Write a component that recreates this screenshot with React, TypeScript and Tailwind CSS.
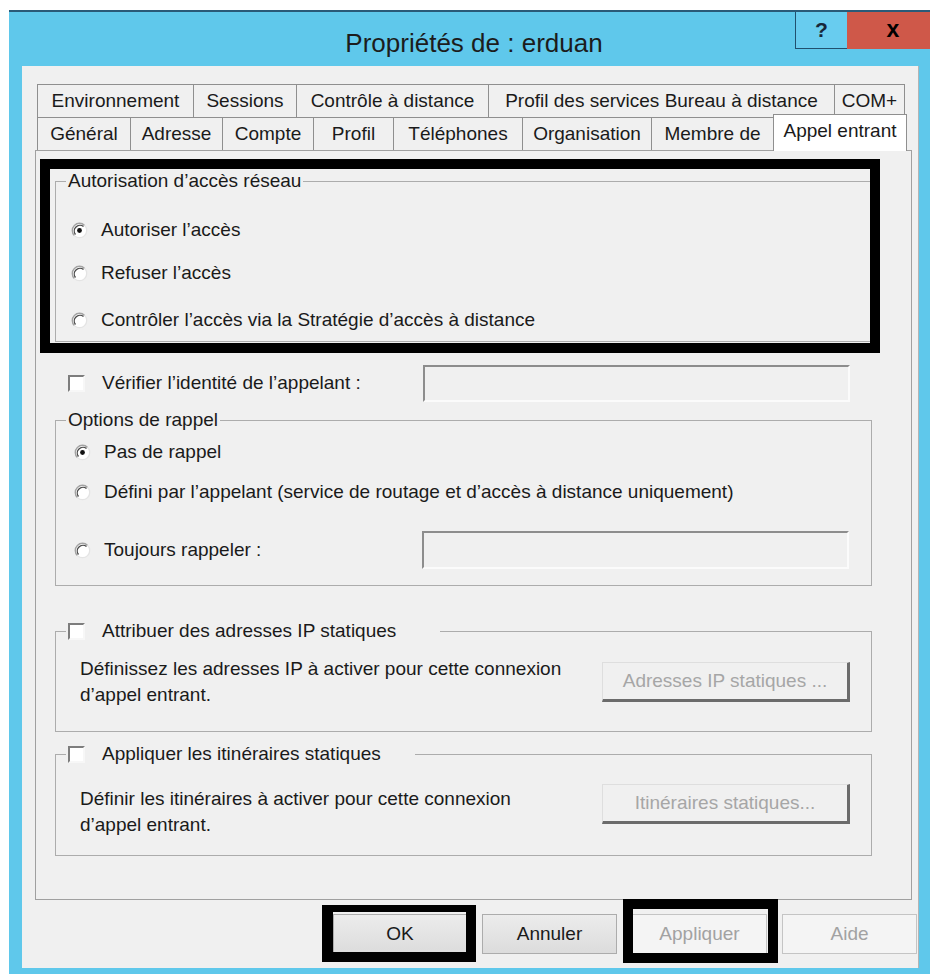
import React from "react";

const FONT: React.CSSProperties = {
  fontFamily: '"Liberation Sans", Arial, sans-serif',
};

type Tab = { label: string; w: string; last?: boolean };

const backRow: Tab[] = [
  { label: "Environnement", w: "w-[156px]" },
  { label: "Sessions", w: "w-[103px]" },
  { label: "Contrôle à distance", w: "w-[192px]" },
  { label: "Profil des services Bureau à distance", w: "w-[346px]" },
  { label: "COM+", w: "w-[71px]", last: true },
];

const frontRow: Tab[] = [
  { label: "Général", w: "w-[93px]" },
  { label: "Adresse", w: "w-[92px]" },
  { label: "Compte", w: "w-[91px]" },
  { label: "Profil", w: "w-[80px]" },
  { label: "Téléphones", w: "w-[129px]" },
  { label: "Organisation", w: "w-[129px]" },
  { label: "Membre de", w: "w-[122px]" },
];

function TabItem({ tab }: { tab: Tab }) {
  return (
    <div
      className={`${tab.w} h-[33px] flex items-center justify-center whitespace-nowrap border-t border-l border-[#8f8f8f] bg-[#f0f0f0] text-[19px] ${
        tab.last ? "border-r" : ""
      }`}
    >
      {tab.label}
    </div>
  );
}

function Radio({ checked = false }: { checked?: boolean }) {
  return (
    <svg width="17" height="17" viewBox="0 0 17 17" className="shrink-0">
      <circle cx="8.5" cy="8.5" r="7.2" fill="#ffffff" />
      <path d="M3.4 13.6 A7.2 7.2 0 0 1 13.6 3.4" fill="none" stroke="#a3a3a3" strokeWidth="1.4" />
      <path d="M4.5 12.5 A5.7 5.7 0 0 1 12.5 4.5" fill="none" stroke="#4a4a4a" strokeWidth="1.3" />
      <path d="M13.6 3.4 A7.2 7.2 0 0 1 3.4 13.6" fill="none" stroke="#e4e4e4" strokeWidth="1.3" />
      {checked && <circle cx="8.5" cy="8.5" r="2.4" fill="#111" />}
    </svg>
  );
}

function Check() {
  return (
    <div className="w-[17px] h-[17px] shrink-0 border-2 border-t-[#7d7d7d] border-l-[#7d7d7d] border-r-[#f7f7f7] border-b-[#f7f7f7] bg-white" />
  );
}

function SunkenField({ h }: { h: string }) {
  return (
    <div
      className={`w-[427px] ${h} border-2 border-t-[#8d8d8d] border-l-[#8d8d8d] border-r-[#fbfbfb] border-b-[#fbfbfb] bg-[#f0f0f0]`}
    />
  );
}

function RaisedButton({ label }: { label: string }) {
  return (
    <div className="w-[248px] h-[40px] shrink-0 flex items-center justify-center border-t border-l border-t-[#dedede] border-l-[#dedede] border-r-[3px] border-b-[3px] border-r-[#6b6b6b] border-b-[#6b6b6b] bg-[#f0f0f0] text-[19px] text-[#a6a6a6] whitespace-nowrap">
      {label}
    </div>
  );
}

function DialogButton({ label, disabled = false }: { label: string; disabled?: boolean }) {
  return (
    <div
      className={`h-[40px] flex items-center justify-center text-[19px] border ${
        disabled
          ? "w-[135px] border-[#c4c4c4] bg-[#f4f4f4] text-[#a2a2a2]"
          : "border-[#acacac] bg-gradient-to-b from-[#ececec] to-[#dcdcdc] text-[#1a1a1a]"
      } ${label === "OK" ? "w-[134px]" : "w-[135px]"}`}
    >
      {label}
    </div>
  );
}

export default function App() {
  return (
    <div className="relative w-[930px] h-[974px] overflow-hidden bg-white text-[#1a1a1a]" style={FONT}>
      {/* window frame */}
      <div className="ml-[9px] mt-[10px] w-[930px] h-[964px] bg-[#5fc8eb] border-t-2 border-[#2a5a78] flex flex-col">
        {/* caption bar */}
        <div className="relative h-[54px] shrink-0 flex items-center justify-center pt-[8px]">
          <span className="text-[26px] leading-[30px] text-[#1c1c1c]">Propriétés de : erduan</span>
          <div className="absolute top-0 left-[786px] flex h-[37px]">
            <div className="w-[52px] h-full flex items-center justify-center border-l border-b border-[#21506e] bg-[#68ccef] text-[21px] font-bold text-[#17273a]">
              ?
            </div>
            <div className="w-[92px] h-full flex items-center justify-center bg-[#cf5849] text-[23px] font-bold leading-none text-black pb-[3px]">
              x
            </div>
          </div>
        </div>

        {/* client area */}
        <div className="ml-[13px] w-[897px] h-[902px] shrink-0 bg-[#f0f0f0] border-r border-[#b4b4b4] pl-[13px] pt-[18px] flex flex-col">
          {/* tab strip */}
          <div className="ml-[2px] flex flex-col">
            <div className="flex h-[33px]">
              {backRow.map((t) => (
                <TabItem key={t.label} tab={t} />
              ))}
            </div>
            <div className="flex h-[33px] items-end">
              {frontRow.map((t) => (
                <TabItem key={t.label} tab={t} />
              ))}
              <div className="relative z-10 w-[134px] h-[37px] mb-[-1px] flex items-center justify-center whitespace-nowrap border-t border-l border-r border-[#8f8f8f] bg-white text-[19px] pb-[4px]">
                Appel entrant
              </div>
            </div>
          </div>

          {/* tab page */}
          <div className="w-[877px] h-[750px] shrink-0 border border-[#a0a0a0] bg-[#f0f0f0] pl-[19px] pt-[19px] flex flex-col text-[19px]">
            {/* network access permission */}
            <fieldset className="w-[817px] border border-[#acacac] pb-[9px]">
              <legend className="ml-[10px] px-[2px] leading-[22px]">Autorisation d’accès réseau</legend>
              <div className="mt-[26px] h-[24px] flex items-center pl-[15px] gap-[13px]">
                <Radio checked />
                <span>Autoriser l’accès</span>
              </div>
              <div className="mt-[19px] h-[24px] flex items-center pl-[15px] gap-[13px]">
                <Radio />
                <span>Refuser l’accès</span>
              </div>
              <div className="mt-[23px] h-[24px] flex items-center pl-[15px] gap-[13px]">
                <Radio />
                <span>Contrôler l’accès via la Stratégie d’accès à distance</span>
              </div>
            </fieldset>

            {/* caller id */}
            <div className="mt-[23px] h-[37px] flex items-center">
              <div className="w-[368px] flex items-center pl-[13px] gap-[17px]">
                <Check />
                <span>Vérifier l’identité de l’appelant :</span>
              </div>
              <SunkenField h="h-[37px]" />
            </div>

            {/* callback options */}
            <fieldset className="mt-[7px] w-[817px] border border-[#acacac] pb-[16px]">
              <legend className="ml-[10px] px-[2px] leading-[22px]">Options de rappel</legend>
              <div className="mt-[9px] h-[24px] flex items-center pl-[18px] gap-[13px]">
                <Radio checked />
                <span>Pas de rappel</span>
              </div>
              <div className="mt-[16px] h-[24px] flex items-center pl-[18px] gap-[13px]">
                <Radio />
                <span>Défini par l’appelant (service de routage et d’accès à distance uniquement)</span>
              </div>
              <div className="mt-[27px] h-[38px] flex items-center">
                <div className="w-[366px] flex items-center pl-[18px] gap-[13px]">
                  <Radio />
                  <span>Toujours rappeler :</span>
                </div>
                <SunkenField h="h-[38px]" />
              </div>
            </fieldset>

            {/* static IP addresses */}
            <fieldset className="mt-[34px] w-[817px] border border-[#acacac] pb-[23px]">
              <legend className="ml-[10px] px-[2px]">
                <span className="w-[370px] h-[22px] flex items-center gap-[17px]">
                  <Check />
                  <span>Attribuer des adresses IP statiques</span>
                </span>
              </legend>
              <div className="mt-[14px] flex items-start">
                <p className="ml-[24px] w-[522px] leading-[26px]">
                  Définissez les adresses IP à activer pour cette connexion
                  <br />
                  d’appel entrant.
                </p>
                <div className="mt-[6px]">
                  <RaisedButton label="Adresses IP statiques ..." />
                </div>
              </div>
            </fieldset>

            {/* static routes */}
            <fieldset className="mt-[11px] w-[817px] border border-[#acacac] pb-[17px]">
              <legend className="ml-[10px] px-[2px]">
                <span className="w-[345px] h-[22px] flex items-center gap-[17px]">
                  <Check />
                  <span>Appliquer les itinéraires statiques</span>
                </span>
              </legend>
              <div className="mt-[19px] flex items-start">
                <p className="ml-[24px] w-[522px] pt-[2px] leading-[26px]">
                  Définir les itinéraires à activer pour cette connexion
                  <br />
                  d’appel entrant.
                </p>
                <RaisedButton label="Itinéraires statiques..." />
              </div>
            </fieldset>
          </div>

          {/* dialog buttons */}
          <div className="mt-[14px] h-[40px] flex justify-end gap-[15px] pr-[1px]">
            <DialogButton label="OK" />
            <DialogButton label="Annuler" />
            <DialogButton label="Appliquer" disabled />
            <DialogButton label="Aide" disabled />
          </div>
        </div>
      </div>

      {/* highlight frames drawn over the dialog */}
      <div className="pointer-events-none absolute left-[40px] top-[159px] w-[840px] h-[194px] border-[10px] border-black" />
      <div className="pointer-events-none absolute left-[322px] top-[905px] w-[154px] h-[57px] border-black border-t-[7px] border-b-[10px] border-l-[11px] border-r-[10px]" />
      <div className="pointer-events-none absolute left-[623px] top-[899px] w-[155px] h-[64px] border-[10px] border-black" />
    </div>
  );
}
